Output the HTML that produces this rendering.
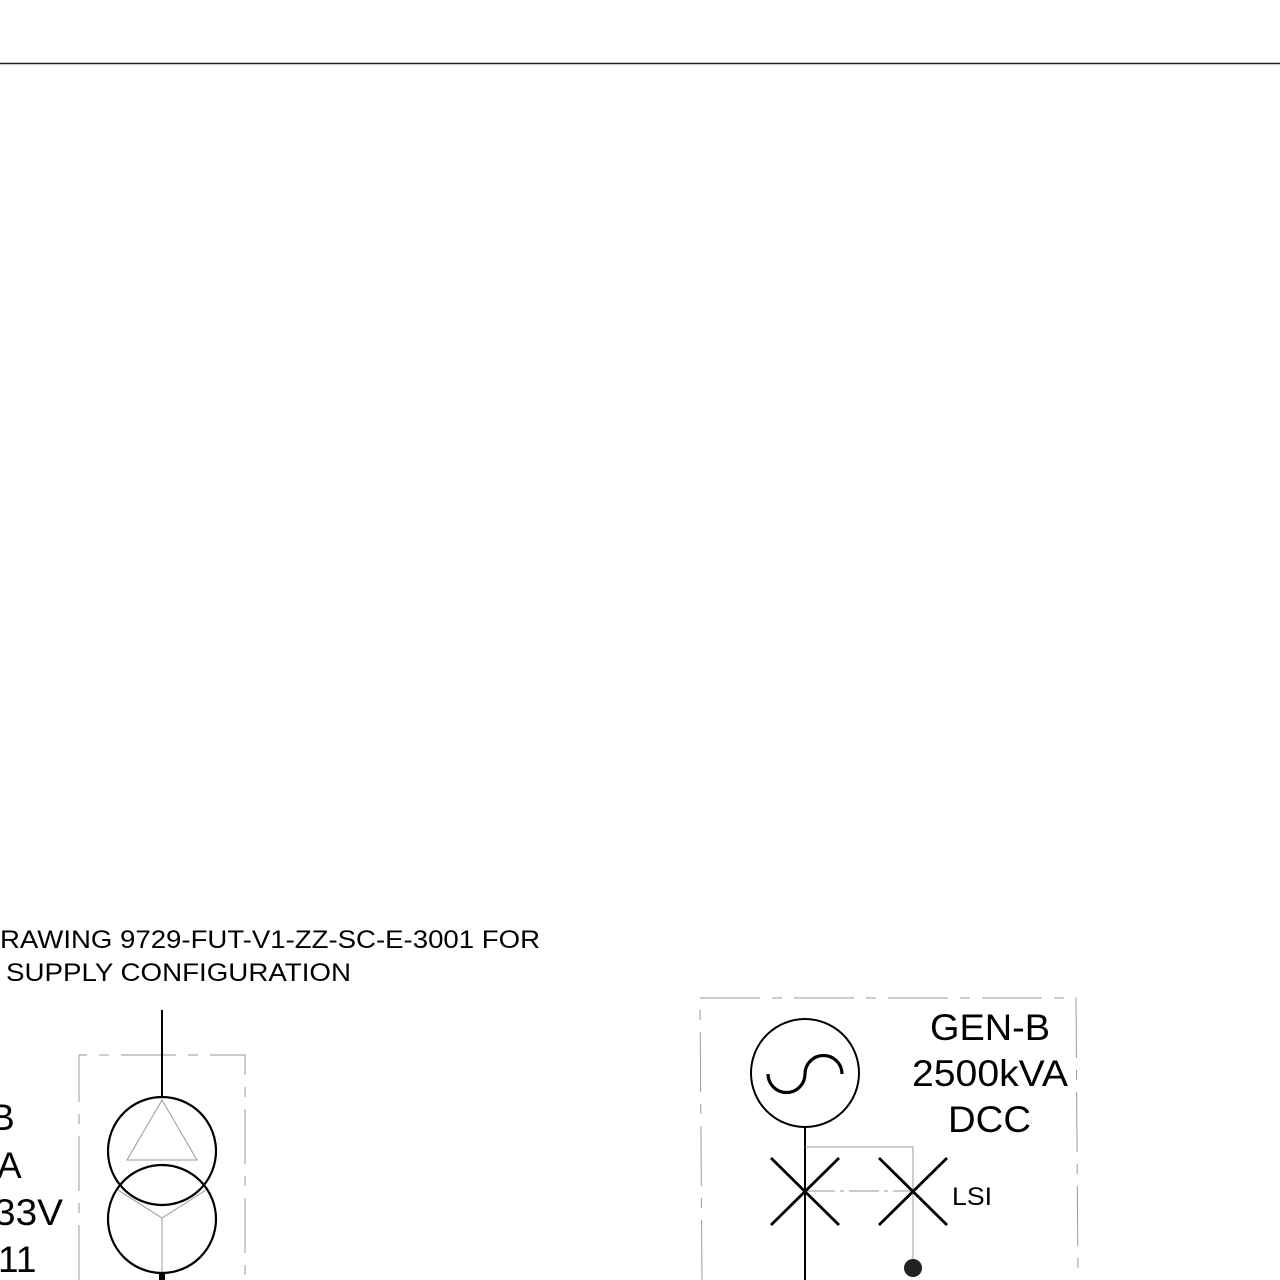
<!DOCTYPE html>
<html><head><style>body{margin:0;background:#fff}svg{display:block}text{font-family:"Liberation Sans",sans-serif;fill:#000}</style></head>
<body>
<svg width="1280" height="1280" viewBox="0 0 1280 1280" xmlns="http://www.w3.org/2000/svg">
<line x1="0" y1="63.5" x2="1280" y2="63.5" stroke="#222" stroke-width="1.4"/>
<text x="0" y="948" font-size="25" textLength="540" lengthAdjust="spacingAndGlyphs">RAWING 9729-FUT-V1-ZZ-SC-E-3001 FOR</text>
<text x="6" y="981" font-size="25" textLength="345" lengthAdjust="spacingAndGlyphs">SUPPLY CONFIGURATION</text>

<g fill="none" stroke="#999" stroke-width="1" stroke-dasharray="55,12,10,12">
<path d="M79 1280 V1055 H245 V1280"/>
</g>
<line x1="162" y1="1010" x2="162" y2="1097" stroke="#000" stroke-width="2"/>
<polygon points="162,1100 127,1160 197,1160" fill="none" stroke="#999" stroke-width="1"/>
<path d="M118 1190 L162 1218 L206 1190 M162 1218 V1280" fill="none" stroke="#999" stroke-width="1"/>
<circle cx="162" cy="1151" r="54" fill="none" stroke="#000" stroke-width="2.2"/>
<circle cx="162" cy="1219" r="54" fill="none" stroke="#000" stroke-width="2.2"/>
<rect x="159" y="1272" width="6" height="8" fill="#000"/>
<text x="-10" y="1130" font-size="37">B</text>
<text x="-3" y="1178" font-size="37">A</text>
<text x="-6" y="1225" font-size="37" textLength="69" lengthAdjust="spacingAndGlyphs">33V</text>
<text x="-2" y="1272" font-size="37">11</text>

<g fill="none" stroke="#999" stroke-width="1" stroke-dasharray="60,12,10,12">
<path d="M702 1280 L700 998 H1076 L1078 1280"/>
</g>
<circle cx="805" cy="1073" r="54" fill="none" stroke="#000" stroke-width="2"/>
<path d="M768 1074 A18 18 0 0 0 805 1074 A18 18 0 0 1 842 1074" fill="none" stroke="#000" stroke-width="3.2"/>
<line x1="805" y1="1127" x2="805" y2="1280" stroke="#000" stroke-width="2"/>
<path d="M805 1147 H913 V1262" fill="none" stroke="#999" stroke-width="1"/>
<line x1="805" y1="1191" x2="913" y2="1191" stroke="#999" stroke-width="1" stroke-dasharray="30,5,4,5"/>
<path d="M771 1158 L839 1225 M839 1158 L771 1225 M879 1158 L947 1225 M947 1158 L879 1225" stroke="#000" stroke-width="2.8"/>
<circle cx="913" cy="1268" r="9" fill="#222"/>
<text x="952" y="1205" font-size="25" textLength="40" lengthAdjust="spacingAndGlyphs">LSI</text>
<text x="930" y="1040" font-size="37" textLength="120" lengthAdjust="spacingAndGlyphs">GEN-B</text>
<text x="912" y="1086" font-size="37" textLength="156" lengthAdjust="spacingAndGlyphs">2500kVA</text>
<text x="948" y="1132" font-size="37" textLength="83" lengthAdjust="spacingAndGlyphs">DCC</text>
</svg>
</body></html>
